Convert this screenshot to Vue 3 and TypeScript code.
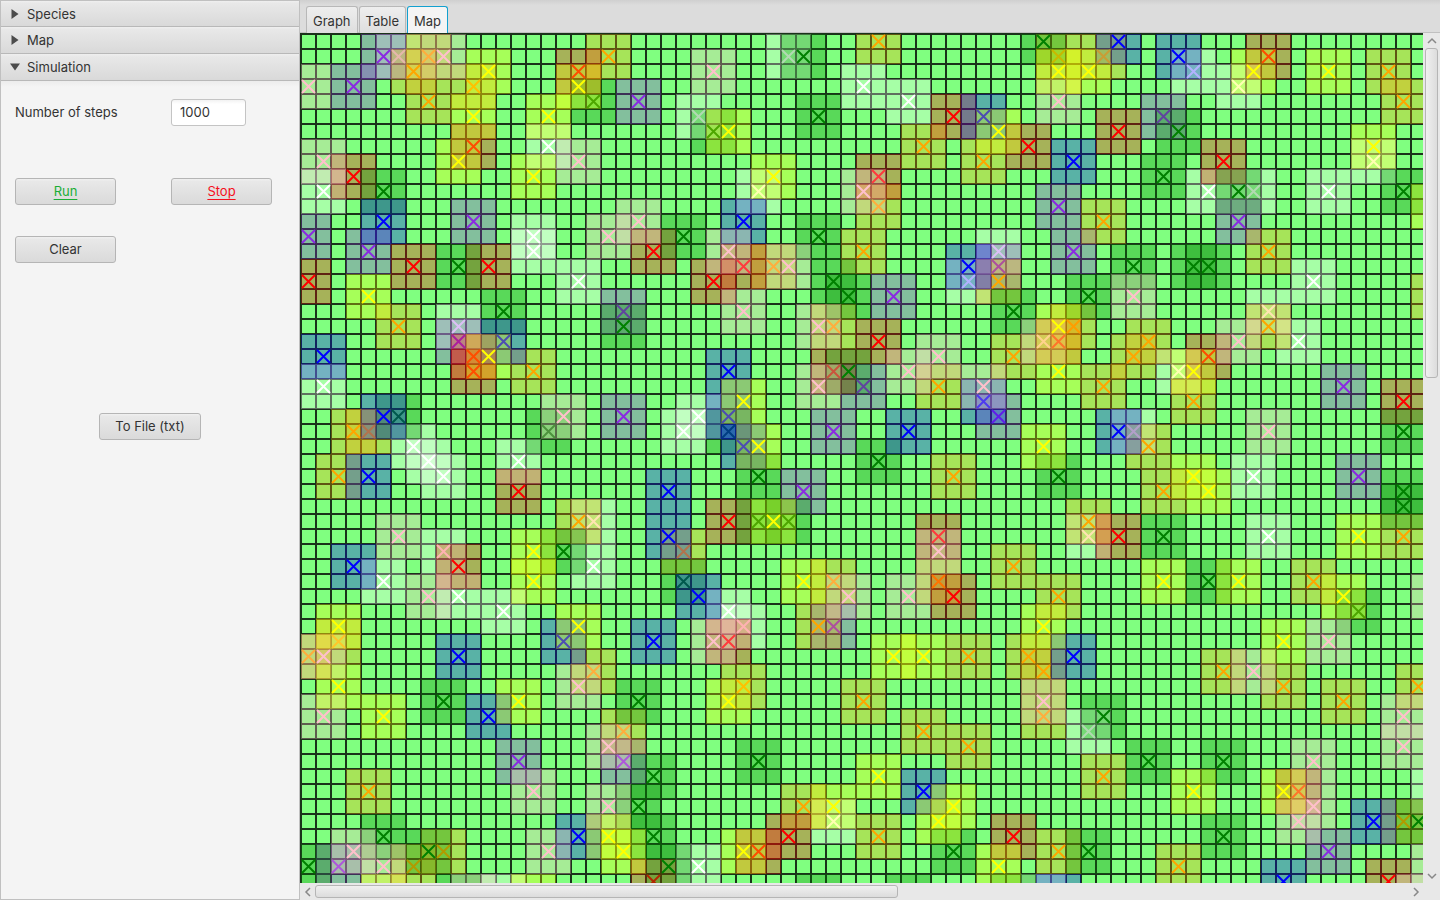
<script setup lang="ts">
import { ref } from 'vue'

interface Species {
  name: string
  color: string
  cells: string
}

interface Agent {
  col: number
  row: number
}

const CELL = 15
const COLS = 140
const ROWS = 140

// Species in painting order; each cell is "column,row".
const species: Species[] = [
  {
    name: 'white',
    color: '#ffffff',
    cells:
      '6,1 16,7 1,10 15,13 15,14 18,16 32,1 37,3 40,4 26,5 30,10 46,14 44,16 59,2 62,3 71,8 60,10 63,10 68,10 67,16 64,18 ' +
      '10,19 1,23 25,26 7,27 8,28 14,28 9,29 19,32 9,34 19,35 5,36 10,37 26,25 66,20 58,22 55,26 63,29 52,33 64,33 ' +
      '13,38 13,57 28,38 29,39 35,52 26,55 49,57 52,46 75,50',
  },
  {
    name: 'violet',
    color: '#8a2be2',
    cells:
      '5,1 3,3 22,4 11,12 0,13 4,14 21,18 46,15 39,17 57,5 50,11 62,12 51,14 10,20 21,25 37,23 46,25 35,26 33,30 ' +
      '69,23 70,29 14,48 21,48 2,55 35,39 68,54',
  },
  {
    name: 'orange',
    color: '#ffa500',
    cells:
      '8,1 20,1 7,2 11,3 8,4 38,0 41,7 45,8 38,11 37,14 31,15 46,16 50,1 53,1 72,2 73,4 53,12 64,14 75,17 ' +
      '6,19 15,22 3,26 4,26 2,29 18,32 25,34 35,19 47,21 42,23 43,29 47,35 35,36 42,36 51,19 64,19 56,20 55,21 53,23 59,24 ' +
      '56,27 57,30 52,32 73,33 67,36 50,37 2,40 0,41 19,42 21,46 4,50 9,54 7,55 34,39 44,41 48,41 49,42 29,43 37,44 49,45 ' +
      '41,46 44,47 33,51 38,53 61,42 65,43 74,43 69,44 53,49 73,52 50,54 58,55',
  },
  {
    name: 'red',
    color: '#ff0000',
    cells:
      '18,2 11,7 3,9 23,14 7,15 12,15 0,16 43,5 48,7 38,9 29,15 27,16 64,1 54,6 61,8 11,21 11,22 14,30 10,35 38,20 35,22 ' +
      '28,32 42,33 43,37 50,20 60,21 73,24 54,33 23,56 28,40 32,53 47,53 30,54 66,50 72,56',
  },
  {
    name: 'green',
    color: '#008000',
    cells:
      '19,4 5,10 25,13 10,15 13,18 49,0 33,1 34,5 27,6 34,13 35,16 36,17 47,18 58,6 57,9 62,10 73,10 55,15 59,15 60,15 52,17 ' +
      '21,19 6,25 16,26 17,34 36,22 28,26 38,28 30,29 30,32 32,32 25,36 73,26 50,29 73,30 73,31 57,33 60,36 9,44 22,44 23,49 ' +
      '22,51 5,53 23,53 8,54 0,55 24,55 10,57 34,57 40,57 47,57 30,48 43,54 70,38 53,45 56,48 61,48 74,52 61,53 52,54',
  },
  {
    name: 'blue',
    color: '#0000ff',
    cells:
      '5,12 45,5 29,12 44,15 54,0 58,1 51,8 13,20 1,21 5,25 4,29 24,30 24,33 3,35 28,22 45,24 28,25 40,26 29,27 26,37 54,26 ' +
      '17,40 23,40 10,41 12,45 18,53 41,50 50,57 51,41 71,52 65,56',
  },
  {
    name: 'pink',
    color: '#ffc0cb',
    cells:
      '9,1 0,3 1,8 18,8 22,12 20,13 27,2 37,10 28,14 32,15 29,18 50,4 55,17 17,25 6,33 8,37 34,19 49,20 42,21 40,22 34,23 ' +
      '45,23 42,34 36,37 40,37 62,20 64,26 75,37 1,41 18,43 1,45 20,47 15,50 20,51 3,54 16,54 5,55 11,57 27,40 49,44 68,40 ' +
      '63,42 73,45 73,47 67,48 67,51 66,52 75,55 74,57',
  },
  {
    name: 'yellow',
    color: '#ffff00',
    cells:
      '12,2 18,3 11,5 16,5 10,8 15,9 4,17 28,6 46,6 31,9 50,2 52,2 63,2 68,2 71,7 75,11 12,21 15,34 15,36 29,24 30,27 49,27 ' +
      '31,32 33,36 50,19 50,22 59,22 59,29 60,30 70,33 57,36 62,36 69,37 2,39 18,39 2,43 14,44 5,45 20,53 21,54 5,57 15,57 ' +
      '49,39 39,41 41,41 28,44 38,49 35,51 43,51 42,52 29,54 46,55 65,40 59,50 65,50',
  },
]

const layers = species.map((s) => ({
  name: s.name,
  color: s.color,
  agents: s.cells.split(' ').map((pair): Agent => {
    const [col, row] = pair.split(',').map(Number)
    return { col, row }
  }),
}))

function areaPath(a: Agent): string {
  const left = Math.max(a.col - 1, 0) * CELL + 1
  const top = Math.max(a.row - 1, 0) * CELL + 1
  const right = (a.col + 2) * CELL + 1
  const bottom = (a.row + 2) * CELL + 1
  return `M${left} ${top}H${right}V${bottom}H${left}Z`
}

function crossPath(a: Agent): string {
  const l = a.col * CELL + 2
  const t = a.row * CELL + 2
  return `M${l} ${t}l13 13m0 -13l-13 13`
}

const steps = ref('1000')
const openPane = ref('Simulation')
const tabs = ['Graph', 'Table', 'Map']
const activeTab = ref('Map')
</script>

<template>
  <div class="app">
    <aside class="side">
      <button
        v-for="pane in ['Species', 'Map', 'Simulation']"
        :key="pane"
        type="button"
        class="pane-title"
        :aria-expanded="openPane === pane"
        @click="openPane = pane"
      >
        <svg class="arrow" viewBox="0 0 10 10" aria-hidden="true">
          <path v-if="openPane === pane" d="M0 1.500H10L5 8.500Z" />
          <path v-else d="M1.500 0V10L8.500 5Z" />
        </svg>
        {{ pane }}
      </button>
      <form class="pane-body" @submit.prevent>
        <div class="grid">
          <label for="steps">Number of steps</label>
          <input id="steps" v-model="steps" type="text" />
        </div>
        <div class="grid actions">
          <button type="button" class="btn run">Run</button>
          <button type="button" class="btn stop">Stop</button>
          <button type="button" class="btn">Clear</button>
        </div>
        <button type="button" class="btn export">To File (txt)</button>
      </form>
    </aside>

    <main class="main">
      <div class="tabs" role="tablist">
        <button
          v-for="tab in tabs"
          :key="tab"
          type="button"
          role="tab"
          class="tab"
          :class="{ active: activeTab === tab }"
          :aria-selected="activeTab === tab"
          @click="activeTab = tab"
        >
          {{ tab }}
        </button>
      </div>
      <div class="view">
        <div class="map">
          <svg :width="COLS * CELL + 2" :height="ROWS * CELL + 2" role="img" aria-label="Simulation map">
            <defs>
              <pattern id="cells" x="1" y="1" :width="CELL" :height="CELL" patternUnits="userSpaceOnUse">
                <rect :width="CELL" :height="CELL" fill="#80ff80" />
                <path class="line" d="M0 0V15M15 0V15M0 0H15M0 15H15" />
              </pattern>
            </defs>
            <rect width="100%" height="100%" fill="url(#cells)" />
            <g v-for="layer in layers" :key="layer.name">
              <g v-for="a in layer.agents" :key="`${a.col}-${a.row}`">
                <path :d="areaPath(a)" :fill="layer.color" fill-opacity="0.3" />
                <path :d="crossPath(a)" :stroke="layer.color" class="cross" />
              </g>
            </g>
          </svg>
        </div>
        <div class="bar vertical">
          <button type="button" aria-label="Scroll up">
            <svg viewBox="0 0 10 10"><path d="M1 7L5 3L9 7" /></svg>
          </button>
          <div class="track"><div class="thumb"></div></div>
          <button type="button" aria-label="Scroll down">
            <svg viewBox="0 0 10 10"><path d="M1 3L5 7L9 3" /></svg>
          </button>
        </div>
        <div class="bar horizontal">
          <button type="button" aria-label="Scroll left">
            <svg viewBox="0 0 10 10"><path d="M7 1L3 5L7 9" /></svg>
          </button>
          <div class="track"><div class="thumb"></div></div>
          <button type="button" aria-label="Scroll right">
            <svg viewBox="0 0 10 10"><path d="M3 1L7 5L3 9" /></svg>
          </button>
        </div>
        <div class="corner"></div>
      </div>
    </main>
  </div>
</template>

<style>
body {
  background: #f4f4f4;
}
</style>

<style scoped>
.app {
  display: flex;
  height: 100vh;
  overflow: hidden;
  font: 13px/16px Inter, 'Noto Sans', sans-serif;
  color: #333;
}
button,
input {
  font: inherit;
  color: inherit;
  box-sizing: border-box;
  margin: 0;
}
.side {
  box-sizing: border-box;
  width: 300px;
  flex: none;
  display: flex;
  flex-direction: column;
  border: 1px solid #c0c0c0;
  background: #f4f4f4;
}
.pane-title {
  display: flex;
  align-items: center;
  gap: 7px;
  height: 27px;
  padding: 0 9px;
  border: 0;
  border-bottom: 1px solid #b8b8b8;
  background: linear-gradient(#efefef, #e8e8e8 10%, #d9d9d9);
  text-align: left;
}
.pane-title:first-child {
  height: 26px;
}
.arrow {
  width: 10px;
  height: 10px;
  fill: #4c4c4c;
}
.pane-body {
  flex: 1;
  display: flex;
  flex-direction: column;
  align-items: center;
  padding: 18px 14px;
  background: linear-gradient(#ececec, #f4f4f4 6px);
}
.grid {
  display: grid;
  grid-template-columns: 101px 101px;
  gap: 31px 55px;
  align-items: center;
  width: 100%;
}
label {
  padding-bottom: 2px;
  white-space: nowrap;
}
input {
  width: 75px;
  height: 27px;
  padding: 0 8px 2px;
  border: 1px solid #c4c4c4;
  border-radius: 3px;
  background: linear-gradient(#f2f2f2, #fff 4px);
}
.actions {
  margin-top: 52px;
}
.btn {
  height: 27px;
  padding: 0 0 2px;
  border: 1px solid #b5b5b5;
  border-radius: 3px;
  background: linear-gradient(#f0f0f0, #e8e8e8 10%, #dadada);
}
.run,
.stop {
  text-decoration: underline;
  text-underline-offset: 3px;
}
.run {
  color: #1aae36;
}
.stop {
  color: #f5101d;
}
.export {
  width: 102px;
  margin-top: 150px;
}
.main {
  flex: 1;
  min-width: 0;
  display: flex;
  flex-direction: column;
}
.tabs {
  box-sizing: border-box;
  display: flex;
  gap: 1px;
  height: 33px;
  flex: none;
  padding: 6px 6px 0;
  border-bottom: 1px solid #c0c0c0;
  background: linear-gradient(#cfcfcf, #dcdcdc 5px);
}
.tab {
  height: 27px;
  padding: 1px 6px 0;
  border: 1px solid #b8b8b8;
  border-bottom: 0;
  border-radius: 3px 3px 0 0;
  background: linear-gradient(#eee, #dedede);
}
.tab.active {
  border-color: #12a0cf;
  background: #f4f4f4;
}
.view {
  flex: 1;
  min-height: 0;
  display: grid;
  grid-template-columns: minmax(0, 1fr) 17px;
  grid-template-rows: minmax(0, 1fr) 17px;
}
.map {
  overflow: hidden;
}
.map svg {
  display: block;
}
.line {
  stroke: #000;
  stroke-opacity: 0.8;
  stroke-width: 2;
  fill: none;
}
.cross {
  stroke-width: 2;
  fill: none;
}
.bar {
  display: flex;
  background: #e8e8e8;
}
.bar.vertical {
  grid-area: 1 / 2;
  flex-direction: column;
  align-items: center;
}
.bar.horizontal {
  grid-area: 2 / 1;
  align-items: center;
}
.corner {
  grid-area: 2 / 2;
  background: #e8e8e8;
}
.bar button {
  display: flex;
  align-items: center;
  justify-content: center;
  width: 15px;
  height: 15px;
  padding: 0;
  border: 0;
  background: none;
}
.bar svg {
  width: 10px;
  height: 10px;
  fill: none;
  stroke: #888;
  stroke-width: 1.5;
}
.track {
  flex: 1;
}
.thumb {
  box-sizing: border-box;
  border: 1px solid #b5b5b5;
  border-radius: 3px;
}
.vertical .thumb {
  width: 13px;
  height: 40.2%;
  background: linear-gradient(90deg, #f0f0f0, #dcdcdc);
}
.horizontal .thumb {
  width: 53.3%;
  height: 13px;
  background: linear-gradient(#f0f0f0, #dcdcdc);
}
</style>
